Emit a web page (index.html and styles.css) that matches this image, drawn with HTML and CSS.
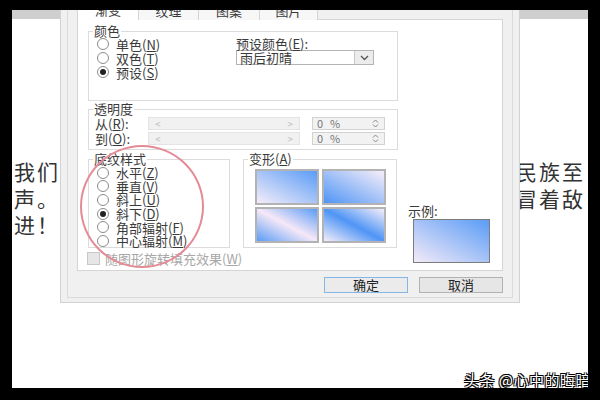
FILE: index.html
```html
<!DOCTYPE html>
<html lang="zh-CN">
<head>
    <meta charset="UTF-8">
    <meta name="viewport" content="width=device-width, initial-scale=1.0">
    <title>填充效果</title>
    <link rel="stylesheet" href="styles.css">
</head>
<body>

    <div class="screen">
        <div class="doc-bar"></div>

        <div class="doc">
            <div class="doc-left">
                <p>我们</p>
                <p>声。</p>
                <p>进！</p>
            </div>
            <div class="doc-right">
                <p>民族至</p>
                <p>冒着敌</p>
            </div>
        </div>

        <div class="dialog">
            <div class="dialog-inner">
                <div class="tabs">
                    <span class="tab active">渐变</span>
                    <span class="tab">纹理</span>
                    <span class="tab">图案</span>
                    <span class="tab">图片</span>
                </div>

                <div class="panel">
                    <div class="panel-main">
                        <div class="group group-color">
                            <div class="group-title">颜色</div>
                            <div class="color-body">
                                <div class="radios">
                                    <div class="radio"><span class="circle"></span>单色(<u>N</u>)</div>
                                    <div class="radio"><span class="circle"></span>双色(<u>T</u>)</div>
                                    <div class="radio"><span class="circle on"></span>预设(<u>S</u>)</div>
                                </div>
                                <div class="preset">
                                    <div class="preset-label">预设颜色(<u>E</u>):</div>
                                    <div class="select">
                                        <span class="select-text">雨后初晴</span>
                                        <span class="select-arrow">
                                            <svg width="9" height="6" viewBox="0 0 9 6"><path d="M1 1 L4.5 4.5 L8 1" fill="none" stroke="#555" stroke-width="1.3"/></svg>
                                        </span>
                                    </div>
                                </div>
                            </div>
                        </div>

                        <div class="group group-alpha">
                            <div class="group-title">透明度</div>
                            <div class="alpha-row">
                                <span class="alpha-label">从(<u>R</u>):</span>
                                <span class="slider"><span>&lt;</span><span>&gt;</span></span>
                                <span class="spin">0<span class="pct">%</span>
                                    <svg class="spin-arrows" width="7" height="9" viewBox="0 0 7 9"><path d="M1 3.5 L3.5 1 L6 3.5 M1 5.5 L3.5 8 L6 5.5" fill="none" stroke="#888" stroke-width="1"/></svg>
                                </span>
                            </div>
                            <div class="alpha-row">
                                <span class="alpha-label">到(<u>O</u>):</span>
                                <span class="slider"><span>&lt;</span><span>&gt;</span></span>
                                <span class="spin">0<span class="pct">%</span>
                                    <svg class="spin-arrows" width="7" height="9" viewBox="0 0 7 9"><path d="M1 3.5 L3.5 1 L6 3.5 M1 5.5 L3.5 8 L6 5.5" fill="none" stroke="#888" stroke-width="1"/></svg>
                                </span>
                            </div>
                        </div>

                        <div class="group-row">
                            <div class="group group-shade">
                                <div class="group-title">底纹样式</div>
                                <div class="shade-list">
                                    <div class="radio"><span class="circle"></span>水平(<u>Z</u>)</div>
                                    <div class="radio"><span class="circle"></span>垂直(<u>V</u>)</div>
                                    <div class="radio"><span class="circle"></span>斜上(<u>U</u>)</div>
                                    <div class="radio"><span class="circle on"></span>斜下(<u>D</u>)</div>
                                    <div class="radio"><span class="circle"></span>角部辐射(<u>F</u>)</div>
                                    <div class="radio"><span class="circle"></span>中心辐射(<u>M</u>)</div>
                                </div>
                            </div>
                            <div class="group group-warp">
                                <div class="group-title">变形(<u>A</u>)</div>
                                <div class="tiles">
                                    <div class="tile tile-1"></div>
                                    <div class="tile tile-2"></div>
                                    <div class="tile tile-3"></div>
                                    <div class="tile tile-4"></div>
                                </div>
                            </div>
                        </div>

                        <div class="check-row">
                            <span class="check-box"></span>随图形旋转填充效果(<u>W</u>)
                        </div>
                    </div>

                    <div class="panel-side">
                        <div class="sample-label">示例:</div>
                        <div class="sample"></div>
                    </div>
                </div>

                <div class="buttons">
                    <button class="btn primary">确定</button>
                    <button class="btn">取消</button>
                </div>
            </div>
        </div>

        <div class="mark-circle"></div>

        <div class="watermark">头条 @心中的晦暗</div>
    </div>

</body>
</html>
```

FILE: styles.css
```css
* {
    box-sizing: border-box;
}
body {
    margin: 0;
    background-color: #000;
    font-family: "Noto Sans CJK SC", "Noto Sans", sans-serif;
}
.screen {
    position: relative;
    width: 576px;
    height: 378px;
    margin: 10px 12px;
    background-color: #fff;
    overflow: hidden;
}
.doc-bar {
    height: 9px;
    background-color: #cfcfcf;
}

/* document text behind the dialog */
.doc {
    display: grid;
    grid-template-columns: 504px 1fr;
    padding-top: 139px;
    font-size: 21px;
    line-height: 26.5px;
    letter-spacing: 2px;
    color: #333;
}
.doc p {
    margin: 0;
    white-space: nowrap;
}
.doc-left {
    padding-left: 2px;
}

/* dialog */
.dialog {
    position: absolute;
    left: 48px;
    top: -26px;
    width: 460px;
    border: 1px solid #d2d2d2;
    background-color: #f0f0f0;
    padding: 6px 6px 4px;
    font-size: 13px;
    line-height: 13px;
    color: #3a3a3a;
}
.dialog-inner {
    border: 1px solid #dadada;
    padding: 9px 9px 4px;
}
.tabs {
    display: flex;
    height: 19px;
    margin-bottom: -1px;
}
.tab {
    position: relative;
    height: 18px;
    margin-top: 1px;
    margin-left: -1px;
    border: 1px solid #d5d5d5;
    border-bottom: none;
    background-color: #f7f7f7;
    text-align: center;
    line-height: 16px;
}
.tab:nth-child(1) { width: 62px; margin-left: 0; }
.tab:nth-child(2) { width: 61px; }
.tab:nth-child(3) { width: 62px; }
.tab:nth-child(4) { width: 59px; }
.tab.active {
    height: 19px;
    margin-top: 0;
    background-color: #fff;
    z-index: 1;
}
.panel {
    display: flex;
    height: 252px;
    padding-left: 10px;
    border: 1px solid #d5d5d5;
    background-color: #fff;
}
.panel-main {
    width: 310px;
}
.group {
    border: 1px solid #dcdcdc;
}
.group-title {
    width: fit-content;
    margin: -7px 0 0 4px;
    padding: 0 1px;
    background-color: #fff;
    line-height: 12px;
}
.group-color {
    height: 70px;
    margin-top: 11px;
}
.color-body {
    display: flex;
    padding-left: 8px;
}
.radios {
    width: 139px;
}
.radio {
    display: flex;
    align-items: center;
    height: 14px;
    line-height: 13px;
    white-space: nowrap;
}
.circle {
    display: flex;
    justify-content: center;
    align-items: center;
    width: 12px;
    height: 12px;
    margin-right: 7px;
    border: 1px solid #8c8c8c;
    border-radius: 50%;
    background-color: #fff;
}
.circle.on::after {
    content: "";
    width: 6px;
    height: 6px;
    border-radius: 50%;
    background-color: #222;
}
.preset-label {
    line-height: 13px;
}
.select {
    display: flex;
    width: 138px;
    height: 15px;
    border: 1px solid #b4b4b4;
    background-color: #fff;
}
.select-text {
    padding-left: 3px;
    line-height: 13px;
}
.select-arrow {
    display: flex;
    justify-content: center;
    align-items: center;
    width: 19px;
    margin-left: auto;
    border-left: 1px solid #c8c8c8;
    background-color: #ececec;
}
.group-alpha {
    height: 41px;
    margin-top: 8px;
}
.alpha-row {
    display: flex;
    height: 13px;
    margin-top: 2px;
}
.alpha-label {
    width: 59px;
    padding-left: 6px;
    line-height: 13px;
}
.slider {
    display: flex;
    justify-content: space-between;
    width: 152px;
    margin-right: 12px;
    padding: 0 6px;
    border: 1px solid #e4e4e4;
    background-color: #f1f1f1;
    color: #bdbdbd;
    font-size: 10px;
    line-height: 11px;
}
.spin {
    display: flex;
    align-items: center;
    width: 73px;
    padding-left: 4px;
    border: 1px solid #d2d2d2;
    background-color: #f2f2f2;
    color: #777;
    font-size: 11px;
    line-height: 11px;
}
.pct {
    margin-left: 7px;
}
.spin-arrows {
    margin-left: auto;
    margin-right: 5px;
}
.group-row {
    display: flex;
    gap: 13px;
    margin-top: 9px;
}
.group-shade {
    width: 142px;
    height: 89px;
}
.shade-list {
    margin-top: 1px;
    padding-left: 8px;
}
.shade-list .radio {
    height: 13.6px;
}
.group-warp {
    width: 154px;
    height: 89px;
}
.tiles {
    display: grid;
    grid-template-columns: repeat(2, 64px);
    grid-template-rows: repeat(2, 36px);
    gap: 2px 3px;
    margin-top: 4px;
    padding-left: 11px;
}
.tile {
    border: 2px solid #b3b3b3;
}
.tile-1 {
    background: linear-gradient(to top right, #f5edf9, #5a9cf6);
}
.tile-2 {
    background: linear-gradient(to bottom left, #f6eef9, #4f95f5);
}
.tile-3 {
    background: linear-gradient(to top right, #5a9cf6, #f6e8f7 50%, #5a9cf6);
}
.tile-4 {
    background: linear-gradient(to top right, #f5eef9, #4f95f5 50%, #f5eef9);
}
.check-row {
    display: flex;
    align-items: center;
    height: 13px;
    margin-top: 4px;
    color: #a8a8a8;
    white-space: nowrap;
}
.check-box {
    width: 13px;
    height: 13px;
    margin: 0 5px 0 -1px;
    border: 1px solid #c8c8c8;
    background-color: #e6e6e6;
}
.panel-side {
    display: flex;
    flex-direction: column;
    justify-content: flex-end;
    width: 90px;
    margin-left: 10px;
    padding-bottom: 7px;
}
.sample-label {
    margin-bottom: 2px;
    line-height: 13px;
}
.sample {
    width: 77px;
    height: 44px;
    margin-left: 5px;
    border: 1px solid #7c7c7c;
    background: linear-gradient(to top right, #f4eaf8, #5a9cf6);
}
.buttons {
    display: flex;
    justify-content: flex-end;
    gap: 11px;
    margin-top: 6px;
}
.btn {
    width: 84px;
    height: 16px;
    padding: 0;
    border: 1px solid #b2b2b2;
    background-color: #e6e6e6;
    font-family: inherit;
    font-size: 13px;
    line-height: 14px;
    color: #222;
}
.btn.primary {
    border-color: #86b6e6;
    background-color: #ebebeb;
}

/* red annotation circle */
.mark-circle {
    position: absolute;
    left: 68px;
    top: 135px;
    width: 124px;
    height: 123px;
    border: 2px solid #e48b95;
    border-radius: 50%;
}

.watermark {
    position: absolute;
    right: -3px;
    bottom: 0;
    color: #fff;
    font-size: 15px;
    line-height: 16px;
    letter-spacing: 0.5px;
    text-shadow: 1px 1px 0 #000, -1px -1px 0 #000, 1px -1px 0 #000, -1px 1px 0 #000;
}
```
